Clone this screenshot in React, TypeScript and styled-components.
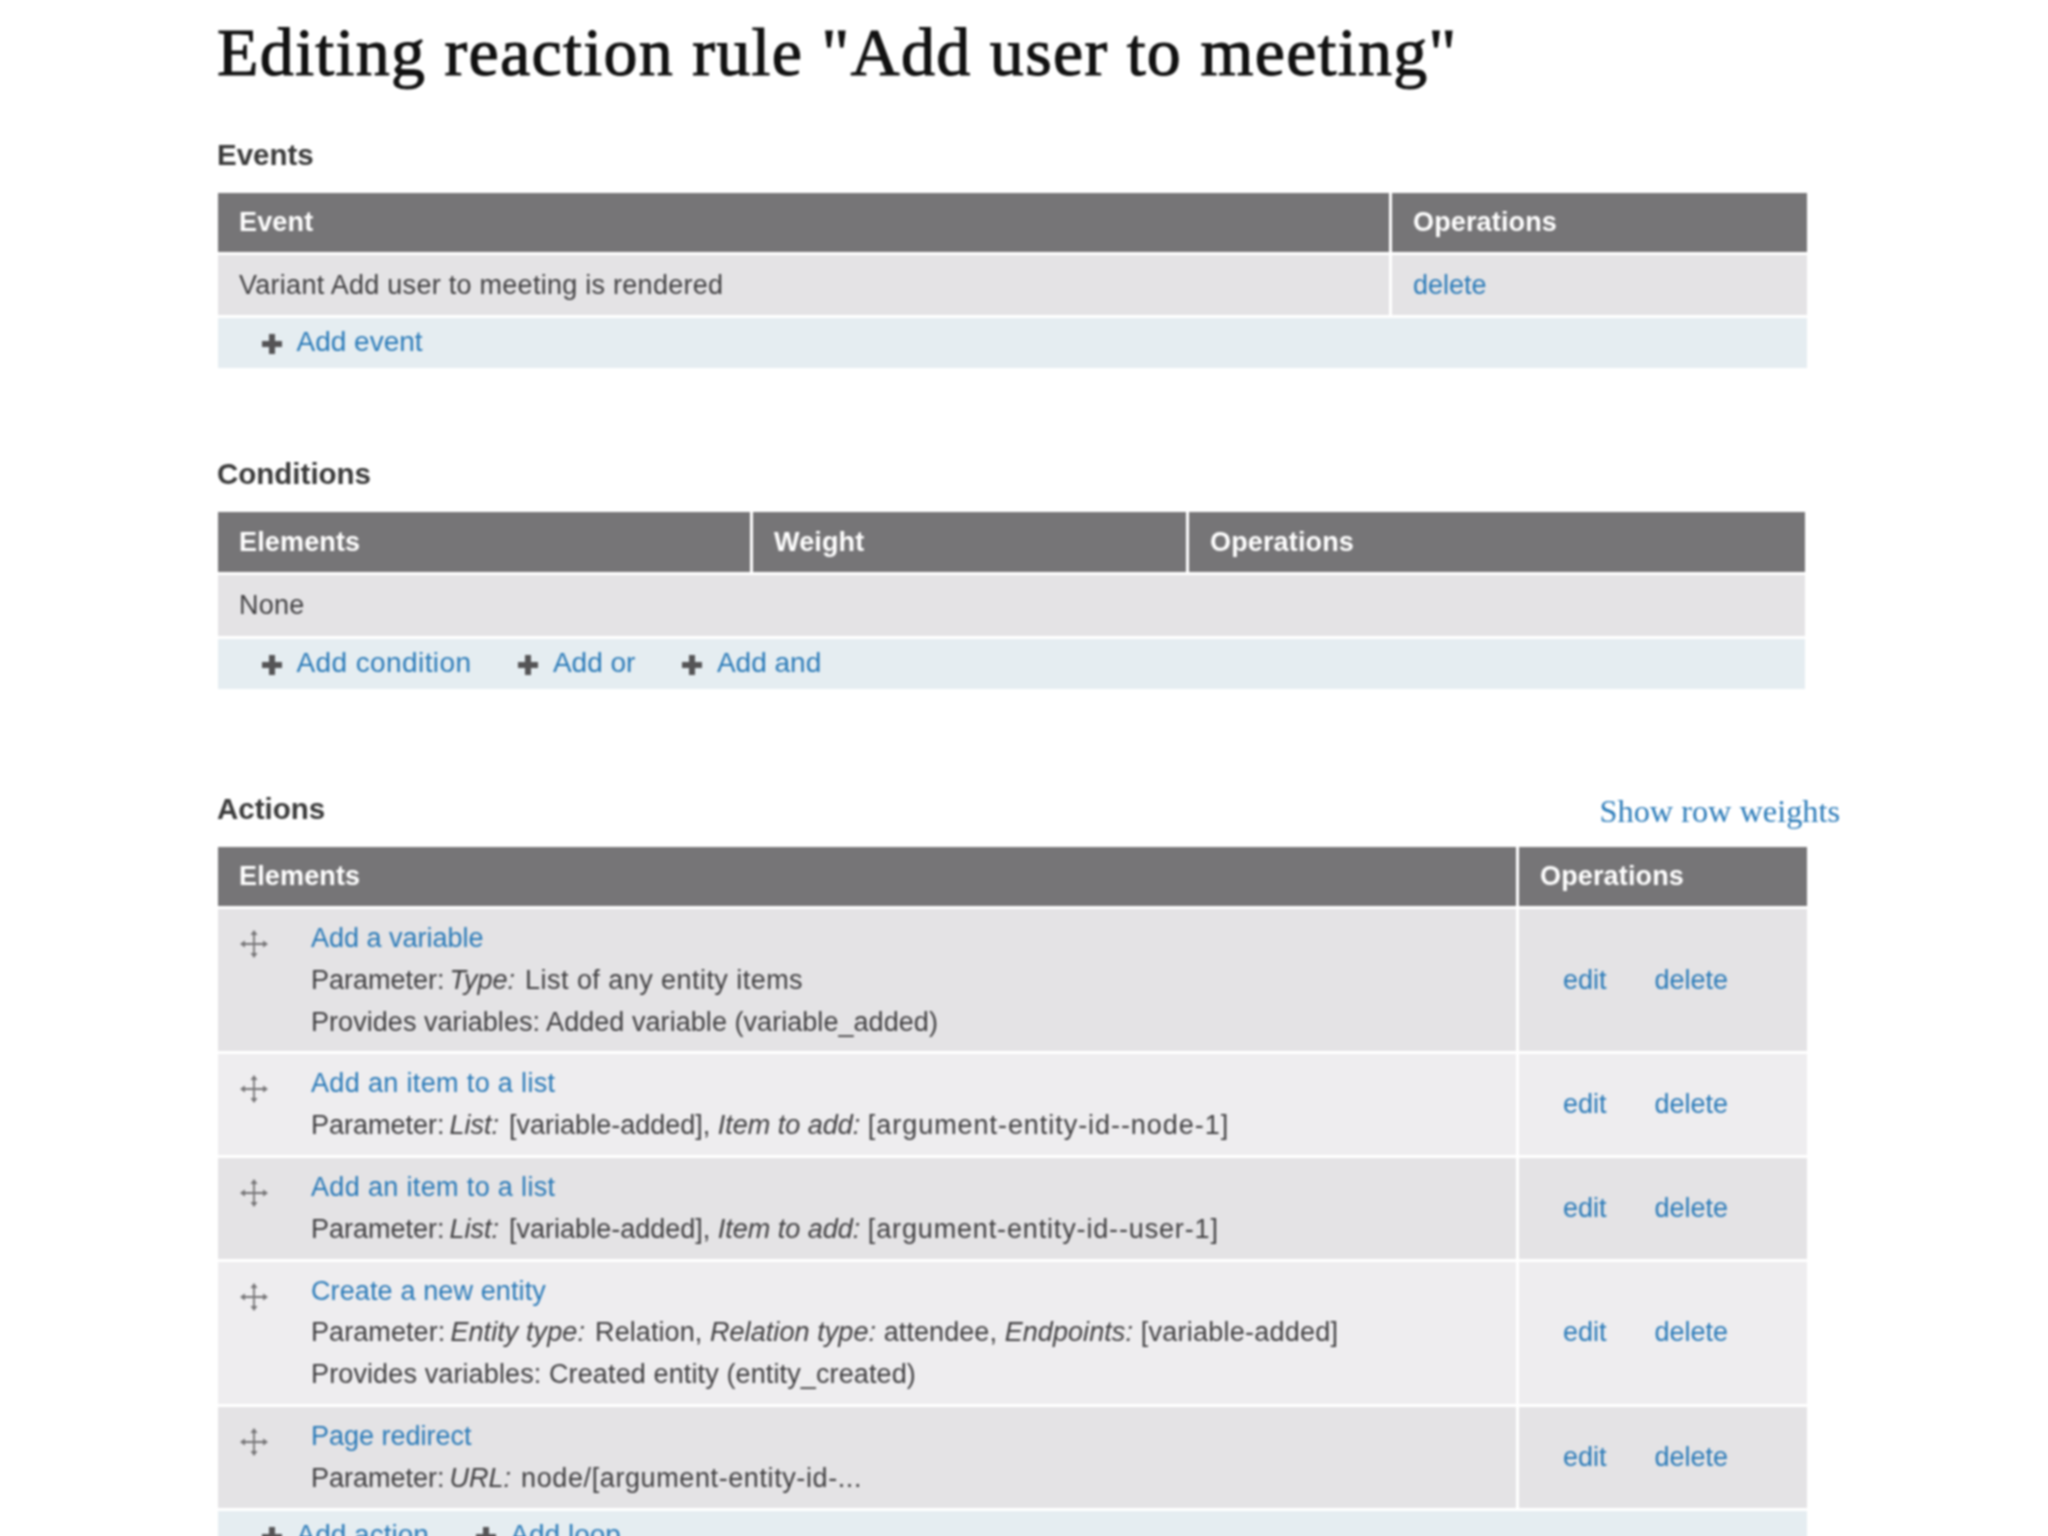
import React from 'react';
import styled, { createGlobalStyle } from 'styled-components';

const GlobalStyle = createGlobalStyle`
  html, body {
    margin: 0;
    height: 1536px;
    overflow: hidden;
    background: #fff;
  }
`;

const Page = styled.div`
  width: 1623px;
  margin-left: 217px;
  font-family: "Liberation Sans", Arial, sans-serif;
  font-size: 27px;
  color: #403f41;
  filter: blur(0.9px);
`;

const Title = styled.h1`
  margin: 0 0 31px;
  font-family: "Liberation Serif", serif;
  font-weight: 400;
  font-size: 68px;
  letter-spacing: 1.3px;
  -webkit-text-stroke: 1.1px #111;
  line-height: 104px;
  color: #111;
  white-space: nowrap;
`;

const SectionHead = styled.div<{ $top?: number }>`
  display: flex;
  justify-content: space-between;
  align-items: center;
  height: 40px;
  margin: ${(p) => p.$top || 0}px 0 18px;
`;

const Heading = styled.h2`
  margin: 0;
  font-size: 29.5px;
  font-weight: 700;
  color: #3a3a3a;
`;

const WeightsToggle = styled.a`
  font-family: "Liberation Serif", serif;
  font-size: 32.3px;
  color: #2a7ab8;
  margin-top: 4px;
`;

const Table = styled.div<{ $width: number }>`
  display: flex;
  flex-direction: column;
  gap: 3px;
  width: ${(p) => p.$width}px;
  margin-left: 1px;
`;

const Row = styled.div<{ $cols: string }>`
  display: grid;
  grid-template-columns: ${(p) => p.$cols};
  column-gap: 3px;
`;

const HeadCell = styled.div<{ $height?: number }>`
  display: flex;
  align-items: center;
  height: ${(p) => p.$height || 59}px;
  padding-left: 21px;
  background: #767577;
  color: #fff;
  font-weight: 700;
  letter-spacing: 0.15px;
`;

const PlainCell = styled.div<{ $span?: boolean; $height?: number }>`
  display: flex;
  align-items: center;
  height: ${(p) => p.$height || 61}px;
  padding-left: 21px;
  background: #e4e3e5;
  letter-spacing: 0.27px;
  ${(p) => (p.$span ? 'grid-column: 1 / -1;' : '')}
`;

const ElementCell = styled.div<{ $even?: boolean }>`
  display: flex;
  padding: 9px 0 8px 21px;
  background: ${(p) => (p.$even ? '#eeedef' : '#e4e3e5')};
`;

const OpsCell = styled.div<{ $even?: boolean }>`
  display: flex;
  align-items: center;
  gap: 48px;
  padding-left: 44px;
  background: ${(p) => (p.$even ? '#eeedef' : '#e4e3e5')};
`;

const DragHandle = styled.span`
  flex: none;
  width: 30px;
  height: 30px;
  margin: 11px 42px 0 0;
  color: #757476;
`;

const ElementBody = styled.div`
  line-height: 41.8px;
`;

const Line = styled.div<{ $track?: number }>`
  white-space: nowrap;
  letter-spacing: ${(p) => p.$track || 0}px;

  i:first-of-type {
    margin: 0 2.5px 0 -2.5px;
  }
`;

const Tail = styled.span<{ $track: number }>`
  letter-spacing: ${(p) => p.$track}px;
`;

const Link = styled.a<{ $track?: number }>`
  color: #2a7ab8;
  letter-spacing: ${(p) => p.$track || 0}px;
`;

const AddBar = styled.div`
  display: flex;
  align-items: center;
  height: 50px;
  padding: 0 0 2px 43px;
  box-sizing: border-box;
  background: #e5edf1;
  font-size: 28px;
`;

const AddItem = styled.span`
  display: inline-flex;
  align-items: center;
  gap: 13.5px;
  margin-right: 46px;
`;

const PlusIcon = styled.svg`
  flex: none;
  width: 22px;
  height: 22px;
  margin-top: 4px;
  color: #555456;
`;

const Plus = () => (
  <PlusIcon viewBox="0 0 22 22">
    <path d="M8 1h6v7h7v6h-7v7H8v-7H1V8h7z" fill="currentColor" />
  </PlusIcon>
);

const Drag = () => (
  <DragHandle>
    <svg width="30" height="30" viewBox="0 0 30 30" fill="none">
      <path d="M15 4v22M4 15h22" stroke="currentColor" strokeWidth="1.8" />
      <path d="M15 1l-3.5 5h7zM15 29l-3.5-5h7zM1 15l5-3.5v7zM29 15l-5-3.5v7z" fill="currentColor" />
    </svg>
  </DragHandle>
);

const actions = [
  {
    title: 'Add a variable',
    track: 0,
    lines: [
      { track: 0, text: <>Parameter: <i>Type:</i> <Tail $track={0.45}>List of any entity items</Tail></> },
      { track: 0.05, text: <>Provides variables: Added variable (variable_added)</> },
    ],
  },
  {
    title: 'Add an item to a list',
    track: 0.35,
    lines: [{ track: 0, text: <>Parameter: <i>List:</i> [variable-added], <i>Item to add:</i> <Tail $track={0.95}>[argument-entity-id--node-1]</Tail></> }],
  },
  {
    title: 'Add an item to a list',
    track: 0.35,
    lines: [{ track: 0, text: <>Parameter: <i>List:</i> [variable-added], <i>Item to add:</i> <Tail $track={0.85}>[argument-entity-id--user-1]</Tail></> }],
  },
  {
    title: 'Create a new entity',
    track: 0.12,
    lines: [
      { track: 0.08, text: <>Parameter: <i>Entity type:</i> Relation, <i>Relation type:</i> attendee, <i>Endpoints:</i> <Tail $track={0.25}>[variable-added]</Tail></> },
      { track: 0.12, text: <>Provides variables: Created entity (entity_created)</> },
    ],
  },
  {
    title: 'Page redirect',
    track: 0,
    lines: [{ track: 0, text: <>Parameter: <i>URL:</i> <Tail $track={0.6}>node/[argument-entity-id-...</Tail></> }],
  },
];

const eventCols = '1171px 415px';
const conditionCols = '532px 433px 616px';
const actionCols = '1298px 288px';

export default function App() {
  return (
    <Page>
      <GlobalStyle />
      <Title>Editing reaction rule "Add user to meeting"</Title>

      <SectionHead>
        <Heading>Events</Heading>
      </SectionHead>
      <Table $width={1589}>
        <Row $cols={eventCols}>
          <HeadCell>Event</HeadCell>
          <HeadCell>Operations</HeadCell>
        </Row>
        <Row $cols={eventCols}>
          <PlainCell $height={60}>Variant Add user to meeting is rendered</PlainCell>
          <PlainCell $height={60}><Link>delete</Link></PlainCell>
        </Row>
        <AddBar>
          <AddItem><Plus /><Link>Add event</Link></AddItem>
        </AddBar>
      </Table>

      <SectionHead $top={86}>
        <Heading>Conditions</Heading>
      </SectionHead>
      <Table $width={1587}>
        <Row $cols={conditionCols}>
          <HeadCell $height={60}>Elements</HeadCell>
          <HeadCell $height={60}>Weight</HeadCell>
          <HeadCell $height={60}>Operations</HeadCell>
        </Row>
        <Row $cols={conditionCols}>
          <PlainCell $span>None</PlainCell>
        </Row>
        <AddBar>
          <AddItem><Plus /><Link $track={0.4}>Add condition</Link></AddItem>
          <AddItem><Plus /><Link>Add or</Link></AddItem>
          <AddItem><Plus /><Link>Add and</Link></AddItem>
        </AddBar>
      </Table>

      <SectionHead $top={100}>
        <Heading>Actions</Heading>
        <WeightsToggle>Show row weights</WeightsToggle>
      </SectionHead>
      <Table $width={1589}>
        <Row $cols={actionCols}>
          <HeadCell>Elements</HeadCell>
          <HeadCell>Operations</HeadCell>
        </Row>
        {actions.map((action, i) => (
          <Row $cols={actionCols} key={i}>
            <ElementCell $even={i % 2 === 1}>
              <Drag />
              <ElementBody>
                <Line $track={action.track}><Link $track={action.track}>{action.title}</Link></Line>
                {action.lines.map((line, j) => (
                  <Line $track={line.track} key={j}>{line.text}</Line>
                ))}
              </ElementBody>
            </ElementCell>
            <OpsCell $even={i % 2 === 1}>
              <Link>edit</Link>
              <Link>delete</Link>
            </OpsCell>
          </Row>
        ))}
        <AddBar>
          <AddItem><Plus /><Link>Add action</Link></AddItem>
          <AddItem><Plus /><Link>Add loop</Link></AddItem>
        </AddBar>
      </Table>
    </Page>
  );
}
